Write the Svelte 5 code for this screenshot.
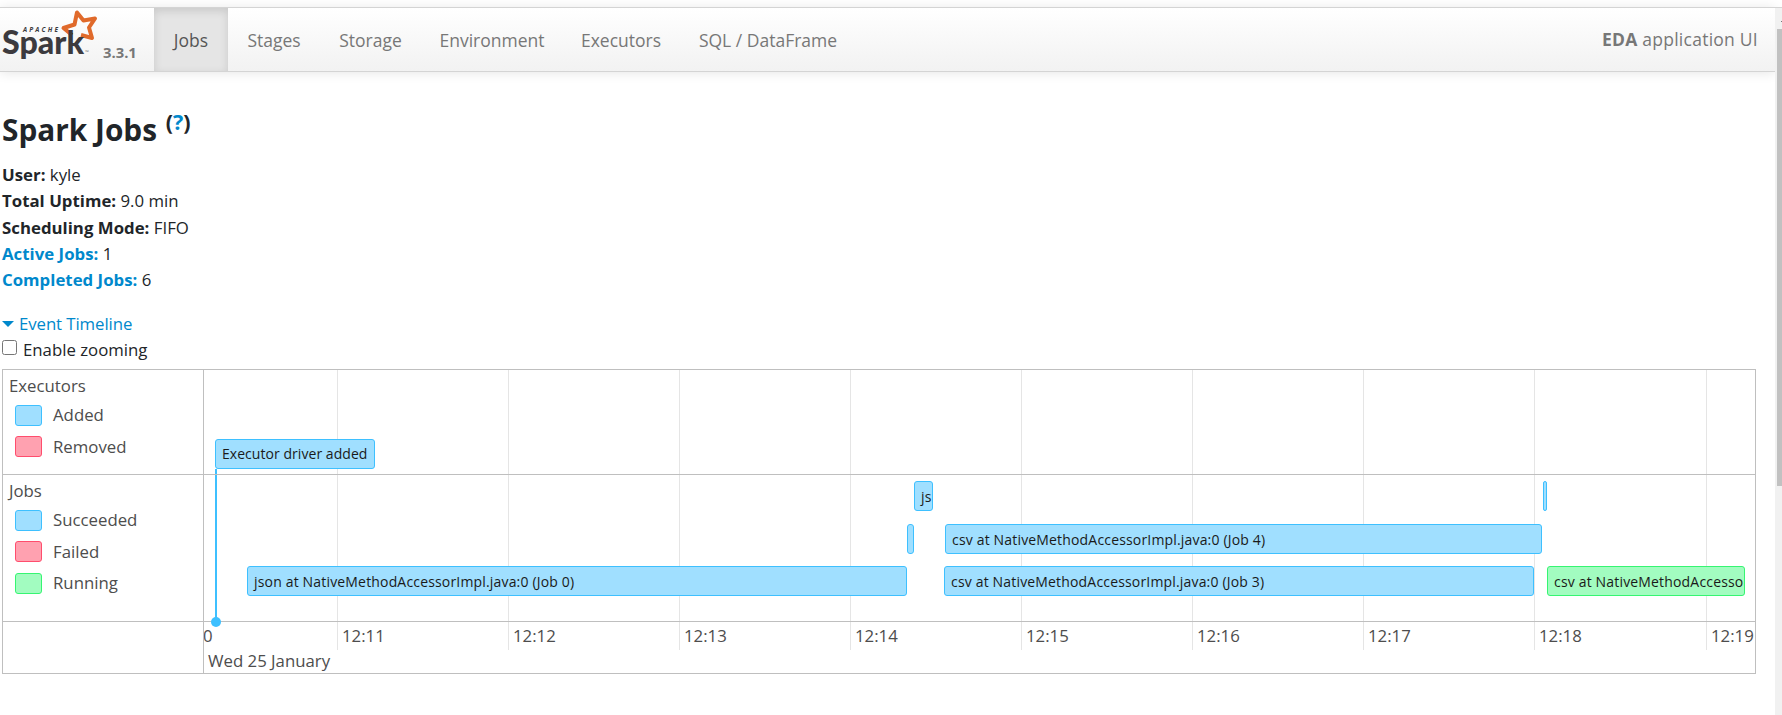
<script>
  const tabs = [
    { label: 'Jobs', width: 74, active: true },
    { label: 'Stages', width: 92 },
    { label: 'Storage', width: 101 },
    { label: 'Environment', width: 142 },
    { label: 'Executors', width: 116 },
    { label: 'SQL / DataFrame', width: 178 }
  ];
  const summary = [
    { key: 'User:', value: 'kyle' },
    { key: 'Total Uptime:', value: '9.0 min' },
    { key: 'Scheduling Mode:', value: 'FIFO' },
    { key: 'Active Jobs:', value: '1', link: true },
    { key: 'Completed Jobs:', value: '6', link: true }
  ];
  const groups = [
    { title: 'Executors', items: [['blue', 'Added'], ['red', 'Removed']] },
    { title: 'Jobs', items: [['blue', 'Succeeded'], ['red', 'Failed'], ['green', 'Running']] }
  ];
  const ticks = ['12:11', '12:12', '12:13', '12:14', '12:15', '12:16', '12:17', '12:18', '12:19'].map(
    (label, i) => ({ label, x: Math.round(133 + i * 171.07) })
  );
  // Offsets are measured from the left edge of the plotting area.
  const bars = [
    { x: 43, y: 196, w: 660, text: 'json at NativeMethodAccessorImpl.java:0 (Job 0)' },
    { x: 703, y: 154, w: 7, text: '' },
    { x: 710, y: 111, w: 19, text: 'js' },
    { x: 740, y: 196, w: 590, text: 'csv at NativeMethodAccessorImpl.java:0 (Job 3)' },
    { x: 741, y: 154, w: 597, text: 'csv at NativeMethodAccessorImpl.java:0 (Job 4)' },
    { x: 1339, y: 111, w: 4, text: '' },
    { x: 1343, y: 196, w: 198, text: 'csv at NativeMethodAccesso', running: true }
  ];
</script>

<div class="page">
  <nav>
    <div class="brand">
      <svg width="98" height="56" viewBox="0 0 98 56" aria-label="Apache Spark">
        <path class="star" d="M72 27 63.500 20 74.500 16.500 77 4.500 83.500 12.500 95 10.500 89 19.500 92 30 81 27" />
        <text class="apache" x="23" y="24" textLength="35">APACHE</text>
        <text class="spark" x="2" y="45.500" textLength="82" lengthAdjust="spacingAndGlyphs">Spark</text>
        <text class="tm" x="85" y="46">™</text>
      </svg>
      <span class="version">3.3.1</span>
    </div>
    {#each tabs as tab}
      <a class:active={tab.active} style:width="{tab.width}px">{tab.label}</a>
    {/each}
    <p class="app"><b>EDA</b> application UI</p>
  </nav>
  <main>
    <h3>Spark Jobs <sup>(<span>?</span>)</sup></h3>
    <ul class="summary">
      {#each summary as s}
        <li><strong class:link={s.link}>{s.key}</strong> {s.value}</li>
      {/each}
    </ul>
    <div class="toggle"><i></i>Event Timeline</div>
    <label><input type="checkbox" />Enable zooming</label>
    <section class="timeline">
      <div class="legend">
        {#each groups as g}
          <div class="group">
            <div class="title">{g.title}</div>
            {#each g.items as [color, name]}
              <div class="entry"><span class="swatch {color}"></span>{name}</div>
            {/each}
          </div>
        {/each}
      </div>
      <div class="plot">
        {#each ticks as t}
          <div class="grid" style:left="{t.x}px"></div>
          <div class="tick" style:left="{t.x + 5}px">{t.label}</div>
        {/each}
        <div class="tick" style:left="-1px">0</div>
        <div class="tick date">Wed 25 January</div>
        <div class="stem"></div>
        <div class="bar blue executor">Executor driver added</div>
        {#each bars as b}
          <div class="bar {b.running ? 'green' : 'blue'}" style:left="{b.x}px" style:top="{b.y}px" style:width="{b.w}px">{b.text}</div>
        {/each}
      </div>
      <div class="rule first"></div>
      <div class="rule second"></div>
      <div class="dot"></div>
    </section>
  </main>
  <div class="scrollbar"><i></i><div class="thumb"></div></div>
</div>

<style>
  :global(body) { background: #fff; overflow: hidden; }
  .page {
    position: relative;
    height: 715px;
    box-sizing: border-box;
    padding-top: 7px;
    font: 400 16.800px/26px "Open Sans", sans-serif;
    color: #212529;
    overflow: hidden;
  }
  nav {
    display: flex;
    box-sizing: border-box;
    height: 65px;
    margin-right: 7px;
    border: solid #d4d4d4;
    border-width: 1px 0;
    background: linear-gradient(#fff, #f2f2f2);
    box-shadow: 0 1px 11px rgba(0, 0, 0, 0.1);
    color: #777;
    font-size: 17.500px;
  }
  .brand { display: flex; width: 154px; }
  .version { margin: 31px 0 0 5px; font-size: 14.800px; line-height: 26px; font-weight: 700; }
  .apache { font: italic 700 6.5px "Open Sans", sans-serif; fill: #3c3a3e; }
  .spark { font: 900 32px Lato, sans-serif; fill: #3c3a3e; }
  .tm { font: 5px "Open Sans", sans-serif; fill: #777; }
  .star { fill: none; stroke: #e06a2b; stroke-width: 4; stroke-linejoin: round; }
  nav a { flex: none; text-align: center; line-height: 65px; }
  nav a.active { color: #555; background: #e5e5e5; box-shadow: inset 0 3px 8px rgba(0, 0, 0, 0.125); }
  .app { margin: 0 17px 0 auto; line-height: 63px; letter-spacing: 0.250px; }
  main { padding: 39px 26px 0 2px; }
  h3 { margin: 0; height: 51px; font-size: 29.800px; line-height: 38px; font-weight: 700; }
  sup { margin-left: 1px; font-size: 21.500px; line-height: 0; vertical-align: 11px; }
  sup span, .link, .toggle { color: #0088cc; }
  strong { letter-spacing: 0.020px; }
  .summary { list-style: none; margin: 0; padding: 0; line-height: 26.250px; }
  .toggle { display: flex; align-items: center; margin-top: 18px; letter-spacing: -0.080px; }
  .toggle i { margin-right: 5px; border: solid transparent; border-width: 6px 6px 0; border-top-color: #08c; }
  label { display: flex; height: 32px; }
  input { width: 15px; height: 15px; margin: 3px 6px 0 0; }
  .timeline {
    position: relative;
    display: flex;
    box-sizing: border-box;
    height: 305px;
    border: 1px solid #bfbfbf;
    color: #4d4d4d;
  }
  .legend { width: 200px; height: 303px; border-right: 1px solid #bfbfbf; }
  .group { height: 105px; box-sizing: border-box; padding: 3px 0 0 6px; }
  .title { height: 26px; }
  .entry { display: flex; align-items: center; height: 31.500px; padding-left: 6px; line-height: 24px; }
  .swatch { box-sizing: border-box; width: 27px; height: 21px; margin-right: 11px; border: 1px solid; border-radius: 3px; }
  .blue { background: #a0dfff; border-color: #3ec0ff; }
  .red { background: #ffa1b0; border-color: #ff4d6d; }
  .green { background: #a2fcc0; border-color: #36f572; }
  .plot { position: relative; flex: 1; overflow: hidden; }
  .grid { position: absolute; top: 0; width: 1px; height: 280px; background: #e5e5e5; }
  .tick { position: absolute; top: 253px; white-space: nowrap; }
  .date { top: 278px; left: 4px; }
  .rule { position: absolute; left: 0; right: 0; height: 1px; background: #bfbfbf; }
  .first { top: 104px; }
  .second { top: 251px; }
  .bar {
    position: absolute;
    box-sizing: border-box;
    height: 30px;
    border-width: 1px;
    border-style: solid;
    border-radius: 3px;
    overflow: hidden;
    white-space: nowrap;
    color: #1a1a1a;
    font-size: 14px;
    letter-spacing: 0.170px;
    line-height: 29px;
    text-indent: 6px;
  }
  .executor { left: 11px; top: 69px; width: 160px; line-height: 28px; letter-spacing: 0.050px; }
  .stem { position: absolute; left: 11px; top: 99px; width: 2px; height: 153px; background: #3ec0ff; }
  .dot { position: absolute; left: 208px; top: 247px; width: 10px; height: 10px; border-radius: 50%; background: #3ec0ff; }
  .scrollbar { position: absolute; right: 0; top: 7px; bottom: 0; width: 7px; background: #f1f1f1; border-top: 1px solid #d4d4d4; box-sizing: border-box; }
  .scrollbar i { position: absolute; right: 0; top: 13px; width: 1px; height: 1px; background: #777; }
  .thumb { margin: 21px 0 0 2px; height: 457px; background: #c1c1c1; }
</style>
